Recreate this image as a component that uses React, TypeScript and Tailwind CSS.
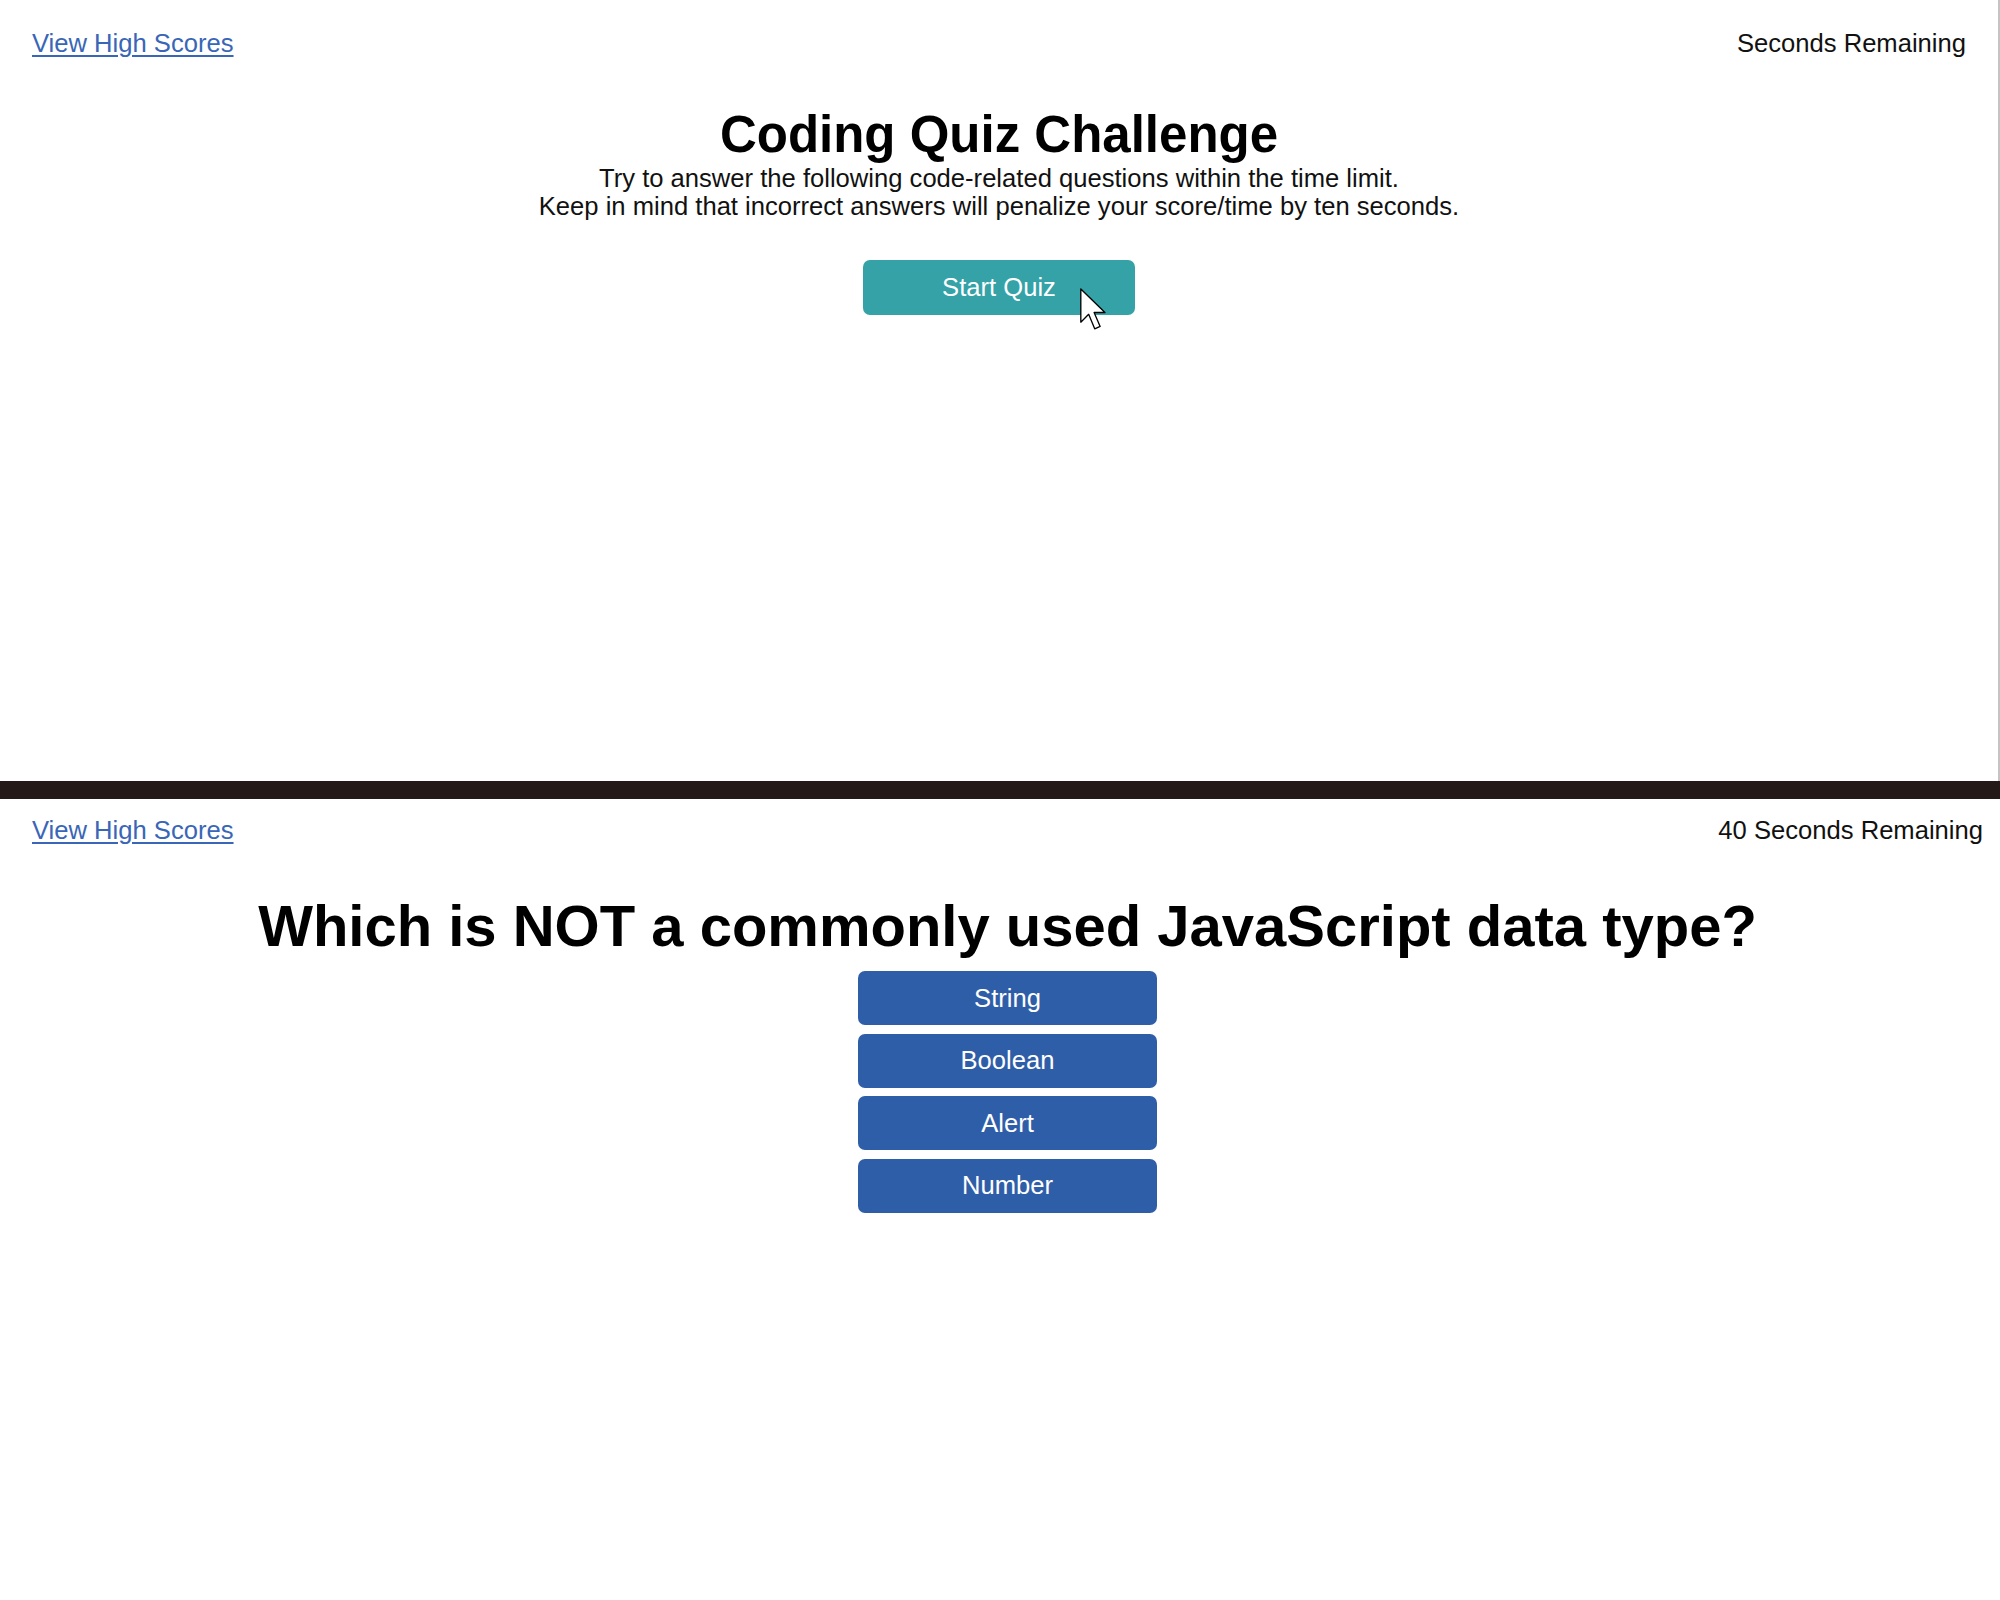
const answers = ["String", "Boolean", "Alert", "Number"]

const Header = ({ seconds }: { seconds?: string }) => (
  <div className="flex flex-row items-center justify-between">
    <a href="#" className="text-[25.6px] leading-[29px] text-[#3966b6] underline underline-offset-[3px]">
      View High Scores
    </a>
    <span className="text-[25.6px] leading-[29px] text-[#111]">
      {seconds ? `${seconds} Seconds Remaining` : "Seconds Remaining"}
    </span>
  </div>
)

const Cursor = () => (
  <svg width="29" height="45" viewBox="0 0 24 37" className="absolute left-[216px] top-[27px]">
    <path
      d="M1.5 1.5 L1.5 29 L8 22.5 L13 34.5 L17.5 32.5 L12.5 21 L21.5 21 Z"
      fill="#fff"
      stroke="#000"
      strokeWidth="1.1"
      strokeLinejoin="round"
    />
  </svg>
)

export default function App() {
  return (
    <div className="w-full h-[1600px] overflow-hidden bg-white font-['Liberation_Sans',Arial,sans-serif]">
      {/* start screen */}
      <section className="h-[781px] border-r-2 border-[#c4c4c4] px-8 pt-[29px]">
        <Header />
        <div className="flex flex-col items-center mt-[48px]">
          <h1 className="text-[51px] leading-[58px] font-bold text-black">Coding Quiz Challenge</h1>
          <p className="text-[25.6px] leading-[28px] text-[#111] text-center">
            Try to answer the following code-related questions within the time limit.
            <br />
            Keep in mind that incorrect answers will penalize your score/time by ten seconds.
          </p>
          <button className="relative mt-[40px] w-[272px] h-[55px] rounded-[7px] bg-[#34a2a7] text-white text-[25.6px]">
            Start Quiz
            <Cursor />
          </button>
        </div>
      </section>

      <div className="h-[18px] bg-[#231a18]" />

      {/* question screen */}
      <section className="w-[2016px] pl-8 pr-[33px] pt-[17px]">
        <Header seconds="40" />
        <div className="flex flex-col items-center mt-[47px]">
          <h2 className="text-[58px] leading-[67px] font-bold text-black">
            Which is NOT a commonly used JavaScript data type?
          </h2>
          <div className="flex flex-col gap-[8.5px] mt-[12px]">
            {answers.map((a) => (
              <button
                key={a}
                className="w-[299px] h-[54px] rounded-[7px] bg-[#2f5ea8] text-white text-[25.6px]"
              >
                {a}
              </button>
            ))}
          </div>
        </div>
      </section>
    </div>
  )
}
